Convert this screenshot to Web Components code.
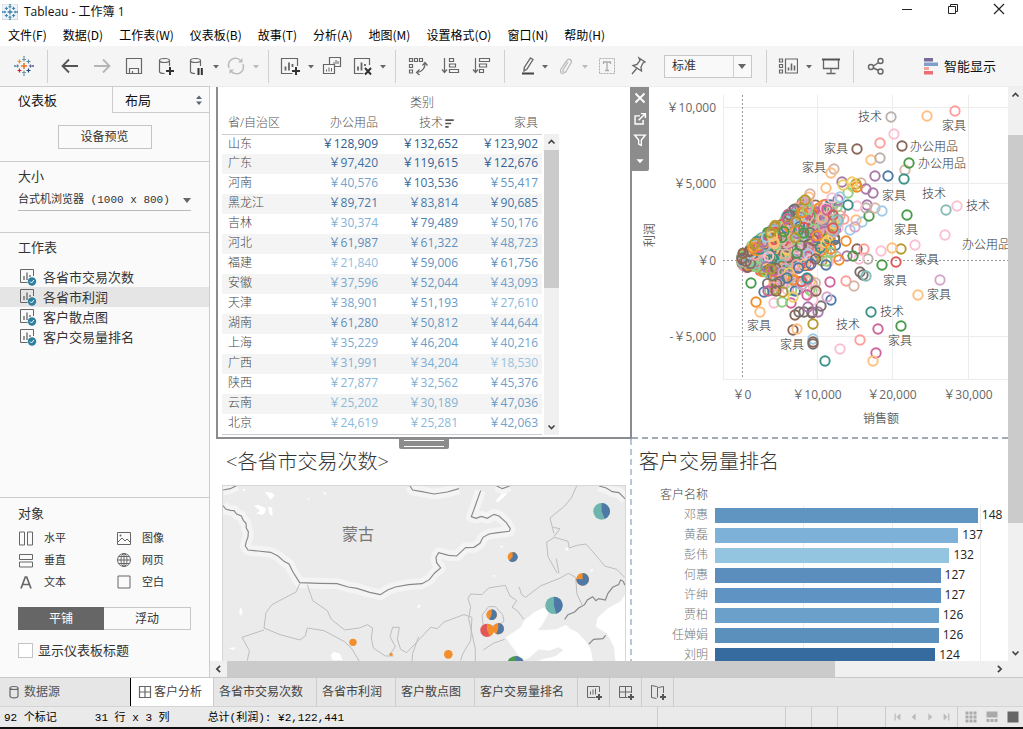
<!DOCTYPE html>
<html lang="zh-CN">
<head>
<meta charset="utf-8">
<title>Tableau - 工作簿 1</title>
<style>
html,body{margin:0;height:100%}
body{font-family:"Open Sans","Noto Sans CJK SC",sans-serif;font-size:12px;line-height:20px;color:#222;background:#fff}
</style>
</head>
<body>
<workbook-app></workbook-app>
<script>
const RESET = `*{box-sizing:border-box}button,select,input{font:inherit;color:inherit;margin:0;border-radius:0}
button{background:none;border:0;padding:0;cursor:pointer}ul{list-style:none;margin:0;padding:0}h2,h3{font:inherit;margin:0}a{color:inherit;text-decoration:none}`;
function define(name, css, html, init) {
  const tpl = document.createElement('template');
  customElements.define(name, class extends HTMLElement {
    connectedCallback() {
      if (this.shadowRoot) return;
      tpl.innerHTML = `<style>${RESET}${css}</style>${typeof html === 'function' ? html(this) : html}`;
      this.attachShadow({mode: 'open'}).append(tpl.content.cloneNode(true));
      if (init) init(this.shadowRoot, this);
    }
  });
}

/* ---------- icons, all on a 20 x 20 grid ---------- */
const plus = (x, y) => `<path d="M${x-4} ${y}h8M${x} ${y-4}v8" stroke="#333" stroke-width="2"/>`;
const S = 'fill="none" stroke="#666"';
const cross = (x, y, r, c, w = 1.2) => `<path d="M${x-r} ${y}h${2*r}M${x} ${y-r}v${2*r}" stroke="${c}" stroke-width="${w}"/>`;
const logo = cols => cross(10,10,3,cols[0],1.6)+cross(10,3.5,2,cols[1])+cross(10,16.5,2,cols[2])+cross(3.5,10,1.6,cols[3])+cross(16.5,10,1.6,cols[4])+cross(5.5,5.5,2,cols[5])+cross(14.5,5.5,2,cols[6])+cross(5.5,14.5,2,cols[7])+cross(14.5,14.5,2,cols[8])+cross(1,10,1,cols[3])+cross(19,10,1,cols[4])+cross(10,.8,.8,cols[1])+cross(10,19.2,.8,cols[2]);
const ICONS = {
  logo: logo(['#e8762c','#7099a6','#7099a6','#5b879b','#5b6591','#eb912c','#59879b','#c72035','#1f447e']),
  app: '<rect x="0" y="0" width="19.500" height="19.500" fill="#eef4f8" stroke="#c9d3da"/>' + logo(Array(9).fill('#3b7ea6')),
  back: '<path d="M18 10H2.500M9 3.500 2.500 10l6.500 6.500" fill="none" stroke="#555" stroke-width="1.800"/>',
  fwd: '<path d="M2 10h15.500M11 3.500l6.500 6.500-6.500 6.500" fill="none" stroke="#b5b5b5" stroke-width="1.800"/>',
  save: `<path d="M2.500 2.500h15v15h-15zM5.500 17.500v-5h9v5M8.500 17.500v-2.500" ${S} stroke-width="1.200"/>`,
  dbadd: `<path d="M13.500 10V4.500M3.500 4.500v11c0 1 2 2 5 2M8.500 2.500c3 0 5 .8 5 2s-2 2-5 2-5-.8-5-2 2-2 5-2z" ${S} stroke-width="1.200"/>` + plus(14,15),
  dbpause: `<path d="M14.500 10V4.500M4.500 4.500v11c0 1 2 2 4.500 2M9.500 2.500c3 0 5 .8 5 2s-2 2-5 2-5-.8-5-2 2-2 5-2z" ${S} stroke-width="1.200"/><path d="M12.500 12v7M15.800 12v7" stroke="#333" stroke-width="2"/>`,
  refresh: '<path d="M3 12a7 7 0 0 1 12-7M17 8a7 7 0 0 1-12 7" fill="none" stroke="#bbb" stroke-width="1.500"/><path d="M16.500 2v4.500H12zM3.500 18v-4.500H8z" fill="#bbb"/>',
  sheetadd: `<path d="M17.500 10V2.500h-16v15h11" ${S} stroke-width="1.200"/><path d="M5.500 14.500v-4M9 14.500v-8M12.500 11V8" stroke="#666" stroke-width="1.800"/>` + plus(16,15),
  dup: `<path d="M7.500 8V1.500h11v9h-6M1.500 8.500h11v9h-11z" ${S} stroke-width="1.200"/><path d="M4.500 15.500v-2M7 15.500v-4M9.500 15.500V12M12 8V6M14 8V4M16 8V5" stroke="#666"/>`,
  sheetdel: `<path d="M17.500 9V2.500h-15v15h9" ${S} stroke-width="1.200"/><path d="M6 14.500v-4M9.500 14.500v-8M13 10V8" stroke="#666" stroke-width="1.800"/><path d="M13 12l6 6.500M19 12l-6 6.500" stroke="#333" stroke-width="2"/>`,
  swap: `<path d="M1.500 2.500h3v3h-3zM6.500 2.500h3v3h-3zM11.500 2.500h3v3h-3zM1.500 8.500h3v3h-3zM1.500 14h3v3h-3zM17 7c.5 5-3 9-8 9.500M14.500 9.500 17 6.500l2.500 3M11.500 13.500l-3 3 3 2.500" ${S} stroke-width="1.200"/>`,
  asc: `<path d="M4.500 2v14M2 13.500l2.500 3 2.500-3M9.500 2.500h4v3h-4zM9.500 8h6v3h-6zM9.500 13.500h9v3h-9z" ${S} stroke-width="1.200"/>`,
  desc: `<path d="M3.500 2v14M1 13.500l2.500 3 2.500-3M7.500 2.500h10v3h-10zM7.500 8h7v3h-7zM7.500 13.500h4v3h-4z" ${S} stroke-width="1.200"/>`,
  pen: `<path d="M15.500 2l2.500 1.500-6 9.500-3 2 .3-3.500z" ${S} stroke-width="1.300"/><path d="M7 17.500h12" stroke="#444" stroke-width="2"/>`,
  clip: '<path d="M13 6l-5 8c-1 2 1.500 3.500 3 1.500l5-8.500c1.500-3-2-5.500-4.500-2L6 13c-1.500 3 .5 5 2.500 4.500" fill="none" stroke="#bbb" stroke-width="1.300"/>',
  text: '<rect x="2.500" y="2.500" width="15" height="15" fill="none" stroke="#aaa" stroke-dasharray="2 1"/><path d="M6.500 8V6h7v2M10 6v8.500M8 14.500h4" fill="none" stroke="#aaa" stroke-width="1.300"/>',
  pin: `<path d="M11 2l6 4-2 1-2 4 .5 4L5 9.500l4-1 3-4zM9 12l-5 6" ${S} stroke-width="1.300"/>`,
  cards: `<path d="M1.500 3h3v3h-3zM1.500 8.500h3v3h-3zM1.500 14h3v3h-3zM7.500 3h12v14h-12z" ${S} stroke-width="1.200"/><path d="M10.500 14.500v-3M13.500 14.500v-7M16.500 14.500v-5" stroke="#666" stroke-width="1.600"/>`,
  present: `<path d="M1 3.500h18" stroke="#555" stroke-width="2"/><path d="M2.500 4v8.500h15V4M10 12.500v5M5.500 17.500h9" ${S} stroke-width="1.300"/>`,
  share: `<circle cx="5" cy="11" r="2.500" ${S} stroke-width="1.400"/><circle cx="14.500" cy="5" r="2.500" ${S} stroke-width="1.400"/><circle cx="14.500" cy="15.500" r="2.500" ${S} stroke-width="1.400"/><path d="M7.500 10l5-3.500M7.500 12l5 2.500" ${S} stroke-width="1.400"/>`,
  showme: '<path d="M3 2h9v3.500H3z" fill="#7a6a99"/><path d="M3 6.500h14V10H3z" fill="#7f9fc8"/><path d="M3 11h5v3H3z" fill="#f3a59a"/><path d="M3 15h9v3.500H3z" fill="#ea6e74"/>',
  caret: '<path d="M7 9h6l-3 3.500z" fill="#666"/>',
  caretbig: '<path d="M6 8h8l-4 5z" fill="#666"/>',
  caretlt: '<path d="M7 9h6l-3 3.500z" fill="#bbb"/>',
  sheet: `<path d="M16.500 9V2.500h-13v13h7" ${S}/><path d="M7 13V9M10 13V5.500M13 10V8" stroke="#666" stroke-width="1.300"/><circle cx="15" cy="14.500" r="4.200" fill="#2d7fa0"/><path d="M13 14.500l1.500 1.500 2.500-3" fill="none" stroke="#fff"/>`,
  horiz: `<path d="M3.500 4h5v13h-5zM11.500 4h5v13h-5z" ${S}/>`,
  vert: `<path d="M3.500 4.500h13v5h-13zM3.500 12h13v5h-13z" ${S}/>`,
  letter: `<path d="M5 16.500 9.300 5h1.400L15 16.500M6.500 12.500h7" ${S} stroke-width="1.700"/>`,
  image: `<path d="M3.500 4.500h13v12h-13z M4 14l4-4 3 3 2-2 3.500 3.500" ${S}/><circle cx="6.500" cy="7.500" r="1" fill="#666"/>`,
  globe: `<circle cx="10" cy="10" r="6.500" ${S}/><ellipse cx="10" cy="10" rx="3" ry="6.500" ${S}/><path d="M10 3.500v13M3.500 10h13M4.500 6.500h11M4.500 13.500h11" ${S}/>`,
  blank: `<path d="M4 4h12v12H4z" ${S}/>`,
  updown: '<path d="M7 9h6l-3-3.500zM7 11.500h6L10 15z" fill="#5a6677"/>',
  cyl: `<path d="M6 6v8c0 2.500 8 2.500 8 0V6M6 6c0-2 8-2 8 0s-8 2-8 0z" ${S} stroke-width="1.200"/>`,
  grid: `<path d="M4.500 4.500h11v11h-11zM10 4.500v11M4.500 10h11" ${S} stroke-width="1.200"/>`,
  nsheet: `<path d="M15.500 10V4.500h-12v11h8M6.500 12.500v-3M9 12.500v-5M11.500 12.500v-6" ${S}/><path d="M12 15h6M15 12v6" stroke="#555" stroke-width="2"/>`,
  ndash: `<path d="M15.500 11V4.500h-12v11h8M9.500 4.500v11M3.500 10h12" ${S}/><path d="M12 15h6M15 12v6" stroke="#555" stroke-width="2"/>`,
  nstory: `<path d="M15.500 11V4.500l-5 1-2-1-5-1v12l5 1M9.500 5.500v10" ${S}/><path d="M12 15h6M15 12v6" stroke="#555" stroke-width="2"/>`,
  min: '<path d="M5 10.500h10" stroke="#222"/>',
  restore: '<path d="M5.500 7.500h7v7h-7zM7.500 7V5.500h7v7H13" fill="none" stroke="#222"/>',
  close: '<path d="M5 5l10 10M15 5 5 15" stroke="#222" stroke-width="1.200"/>',
  wclose: '<path d="M5 5l10 10M15 5 5 15" stroke="#fff" stroke-width="2"/>',
  wgoto: '<path d="M10 6.500H4.500v9h9V11M8.500 11.500l7-7M11 4h5v5" fill="none" stroke="#fff" stroke-width="1.600"/>',
  wfilter: '<path d="M4 4.500h12L11.500 10v6l-3-1.500V10z" fill="none" stroke="#fff" stroke-width="1.500"/>',
  wcaret: '<path d="M6 8h8l-4 4.500z" fill="#fff"/>',
  sort: '<path d="M5 6h10M5 10h7M5 14h4" stroke="#555" stroke-width="2"/>',
  up: '<path d="M6 12l4-4 4 4" fill="none" stroke="#444" stroke-width="2.200"/>',
  down: '<path d="M6 8l4 4 4-4" fill="none" stroke="#444" stroke-width="2.200"/>',
  left: '<path d="M12 6l-4 4 4 4" fill="none" stroke="#444" stroke-width="2.200"/>',
  right: '<path d="M8 6l4 4-4 4" fill="none" stroke="#444" stroke-width="2.200"/>',
  first: '<path d="M6.500 5.500v9" stroke="#bbb" stroke-width="1.500"/><path d="M8 10l5-4.500v9z" fill="#bbb"/>',
  prev: '<path d="M7 10l5-4.500v9z" fill="#bbb"/>',
  next: '<path d="M13 10 8 5.500v9z" fill="#bbb"/>',
  last: '<path d="M13.500 5.500v9" stroke="#bbb" stroke-width="1.500"/><path d="M12 10 7 5.500v9z" fill="#bbb"/>',
  tiles: '<path d="M4.500 6h11M4.500 10h11M4.500 14h11" stroke="#aaa" stroke-width="3" stroke-dasharray="3 1"/>',
  film: '<path d="M4.500 4.500h11v6h-11z" fill="#aaa"/><path d="M4.500 13.500h11" stroke="#aaa" stroke-width="3" stroke-dasharray="3 1"/>',
  full: '<path d="M4.500 4.500h11v11h-11z" fill="#666"/>'
};
define('ui-icon', ':host{display:inline-flex;flex:none;width:20px;height:20px}svg{display:block;width:100%;height:100%}',
  el => `<svg viewBox="0 0 20 20" aria-hidden="true">${ICONS[el.getAttribute('name')]}</svg>`);
const ic = n => `<ui-icon name="${n}"></ui-icon>`;

/* ---------- title and menu ---------- */
define('title-bar', `:host{display:flex;align-items:center;height:23px;padding:0 14px 0 2px;color:#111}
 .app{width:16px;height:16px;margin-right:6px}h1{font:inherit;margin:0;flex:1}.win{display:flex;gap:26px}`,
  `<ui-icon class="app" name="app"></ui-icon><h1><slot></slot></h1><div class="win">${[['min','最小化'],['restore','还原'],['close','关闭']].map(b=>`<button aria-label="${b[1]}">${ic(b[0])}</button>`).join('')}</div>`);

define('menu-bar', `:host{display:block}ul{display:flex;gap:16px;height:23px;align-items:center;padding:0 8px;font-family:"Noto Sans CJK SC",sans-serif;color:#000}button{white-space:nowrap;display:block}`,
  `<ul>${['文件(F)','数据(D)','工作表(W)','仪表板(B)','故事(T)','分析(A)','地图(M)','设置格式(O)','窗口(N)','帮助(H)'].map(t=>`<li><button>${t}</button></li>`).join('')}</ul>`);

/* ---------- toolbar ---------- */
const b = (n, l, w = '') => `<button class="${w}" aria-label="${l}">${ic(n)}</button>`;
const caret = (n = 'caret') => `<button class="c" aria-label="更多">${ic(n)}</button>`;
define('tool-bar', `:host{display:flex;align-items:center;height:40px;background:#f5f5f5;flex:none}
 .g{display:flex;align-items:center;height:33px;padding:0 6px;border-right:1px solid #d0d0d0}
 .g.end{border:0}.g button{width:32px;height:28px;display:flex;justify-content:center;align-items:center}
 .g button.m{width:30px}.g button.s{width:28px}.g button.c{width:12px}.g button.c ui-icon{margin:0 -4px}
 .g button.l{width:35px}
 label{display:flex;align-items:center;position:relative;margin:0 8px 0 11px}
 select{appearance:none;width:88px;height:23px;border:1px solid #c8c8c8;background:#f9f9f9;padding:0 24px 0 7px;color:#333}
 label::after{content:"";position:absolute;right:18px;top:1px;bottom:1px;border-left:1px solid #d0d0d0}
 label ui-icon{position:absolute;right:0;pointer-events:none}
 .show{margin-left:auto;margin-right:27px;display:flex;align-items:center;gap:3px;font-size:13px;color:#111;white-space:nowrap}`,
 `<div class="g">${b('logo','开始页','l')}</div>
  <div class="g">${b('back','撤消')}${b('fwd','重做')}${b('save','保存')}${b('dbadd','新建数据源')}${b('dbpause','暂停自动更新','s')}${caret()}${b('refresh','运行更新','s')}${caret('caretlt')}</div>
  <div class="g">${b('sheetadd','新建工作表','m')}${caret()}${b('dup','复制','m')}${b('sheetdel','清除','m')}${caret()}</div>
  <div class="g">${b('swap','交换行和列')}${b('asc','升序')}${b('desc','降序')}</div>
  <div class="g">${b('pen','突出显示','s')}${caret()}${b('clip','组成员','s')}${caret('caretlt')}${b('text','显示标签')}${b('pin','固定轴','m')}<label><select aria-label="适合"><option>标准</option><option>整个视图</option></select>${ic('caretbig')}</label></div>
  <div class="g">${b('cards','显示卡','m')}${caret()}${b('present','演示模式')}</div>
  <div class="g end">${b('share','共享')}</div>
  <button class="show">${ic('showme')}<span>智能显示</span></button>`);

/* ---------- side panel ---------- */
define('side-panel', `:host{display:flex;flex-direction:column;width:210px;flex:none;background:#fafafa;border-right:1px solid #ccc;border-top:1px solid #ccc;color:#333}
 .tabs{display:flex;height:26px;font-size:13px;color:#111}.tabs button{text-align:left;display:flex;align-items:center}
 .tabs button:first-child{width:112px;padding-left:18px}.tabs button:last-child{flex:1;justify-content:space-between;padding-left:12px;border-left:1px solid #ccc;border-bottom:1px solid #ccc}
 section{border-bottom:1px solid #ccc;padding:0 18px}
 h2{font-size:13px}
 .preview{height:49px;display:flex;justify-content:center;align-items:center}.preview button{width:94px;height:24px;border:1px solid #c4c4c4}
 .size{height:71px;padding-top:4px}.size label{display:flex;position:relative;margin-top:4px}
 .size select{appearance:none;border:0;border-bottom:1px solid #bbb;background:none;width:100%;height:21px;padding:0;font:11px/20px "Liberation Mono","Noto Sans CJK SC",monospace;white-space:pre}
 .size ui-icon{position:absolute;right:-6px;top:0;pointer-events:none}
 .sheets{flex:1;padding:4px 0 0}.sheets h2{padding:0 18px;margin-bottom:10px}
 .sheets a{display:flex;align-items:center;height:20px;padding-left:17px;gap:6px;font-size:13px}.sheets .on{background:#e5e5e5}
 .obj{height:179px;border:0;padding-top:5px}
 .objs{display:grid;grid-template-columns:98px 1fr;grid-auto-rows:22px;margin-top:4px;font-size:11px}.objs li{display:flex;align-items:center;gap:8px;margin-left:-2px}
 .seg{display:flex;height:23px;border:1px solid #c8c8c8;margin-top:14px}.seg button{flex:1}.seg .on{background:#666;color:#fff;margin:-1px 0 -1px -1px}
 .chk{display:flex;align-items:center;gap:5px;margin-top:10px;font-size:13px}input{appearance:none;width:15px;height:15px;border:1px solid #c4c4c4;background:#fff}`,
 `<div class="tabs" role="tablist"><button role="tab" aria-selected="true">仪表板</button><button role="tab">布局${ic('updown')}</button></div>
  <section class="preview"><button>设备预览</button></section>
  <section class="size"><h2>大小</h2><label><select aria-label="大小"><option>台式机浏览器 (1000 x 800)</option></select>${ic('caretbig')}</label></section>
  <section class="sheets"><h2>工作表</h2><ul>${['各省市交易次数','各省市利润','客户散点图','客户交易量排名'].map((t,i)=>`<li><a href="#sheet-${i}" class="${i===1?'on':''}">${ic('sheet')}${t}</a></li>`).join('')}</ul></section>
  <section class="obj"><h2>对象</h2><ul class="objs">${[['horiz','水平'],['image','图像'],['vert','垂直'],['globe','网页'],['letter','文本'],['blank','空白']].map(o=>`<li>${ic(o[0])}${o[1]}</li>`).join('')}</ul>
  <div class="seg"><button class="on">平铺</button><button>浮动</button></div>
  <label class="chk"><input type="checkbox">显示仪表板标题</label></section>`);

/* ---------- scroll bar: start/size are shares of the track ---------- */
define('scroll-bar', `:host{display:flex;background:#f0f0f0;flex:none;height:16px}:host([vertical]){flex-direction:column;height:auto;width:15px}
 .t{flex:1;display:flex;flex-direction:inherit;min-height:0}.p{flex:var(--start,0)}.h{flex:var(--size,1);background:#cbcbcb}.e{flex:var(--rest,0)}
 ui-icon{width:17px;height:16px}:host([vertical]) ui-icon{width:15px}`,
 el => { const v = el.hasAttribute('vertical'); return `${ic(v?'up':'left')}<div class="t"><div class="p"></div><div class="h"></div><div class="e"></div></div>${ic(v?'down':'right')}`; });

/* ---------- crosstab ---------- */
const ROWS = [['山东',128909,132652,123902],['广东',97420,119615,122676],['河南',40576,103536,55417],['黑龙江',89721,83814,90685],['吉林',30374,79489,50176],['河北',61987,61322,48723],['福建',21840,59006,61756],['安徽',37596,52044,43093],['天津',38901,51193,27610],['湖南',61280,50812,44644],['上海',35229,46204,40216],['广西',31991,34204,18530],['陕西',27877,32562,45376],['云南',25202,30189,47036],['北京',24619,25281,42063]];
const STOPS = [[18000,[150,196,224]],[45000,[107,157,200]],[85000,[72,122,172]],[132652,[42,87,141]]];
function shade(v) {
  let i = 0; while (i < 2 && v > STOPS[i+1][0]) i++;
  const [a, ca] = STOPS[i], [z, cz] = STOPS[i+1], t = (v-a)/(z-a);
  return `rgb(${ca.map((c,k)=>Math.round(c+(cz[k]-c)*t))})`;
}
const YEN = '\uFFE5';
const yen = v => YEN + v.toLocaleString('en-US');
define('crosstab-view', `:host{display:flex;padding:7px 0 0 4px}
 table{border-collapse:collapse;width:320px;table-layout:fixed;color:#666;border-bottom:1px solid #ccc}
 th,td{height:20px;padding:0 4px 0 0;text-align:right;font-weight:300;line-height:18px;vertical-align:top;white-space:nowrap}
 th:first-child{text-align:left;padding-left:6px}
 tbody th{color:#444}thead th{color:#555}thead .top th{text-align:center;padding:0}
 thead .cols{border-bottom:1px solid #ccc}tbody tr:nth-child(even){background:#f4f4f4}
 .s{display:inline-flex;align-items:center;height:18px}.s ui-icon{width:17px;height:17px;margin:0 0 0 -2px}td{font-weight:400}
 scroll-bar{margin:40px 0 0 2px;--start:0;--size:138;--rest:130}`,
 `<table><thead><tr class="top"><td></td><th colspan="3" scope="colgroup">类别</th></tr><tr class="cols"><th scope="col">省/自治区</th><th scope="col">办公用品</th><th scope="col"><span class="s">技术${ic('sort')}</span></th><th scope="col">家具</th></tr></thead>
 <tbody>${ROWS.map(r=>`<tr><th scope="row">${r[0]}</th>${r.slice(1).map(v=>`<td style="color:${shade(v)}">${yen(v)}</td>`).join('')}</tr>`).join('')}</tbody></table><scroll-bar vertical></scroll-bar>`);

/* ---------- scatter plot ---------- */
const P = {n:'#4e79a7',b:'#a0cbe8',o:'#f28e2b',O:'#ffbe7d',g:'#4a9a4a',G:'#8cd17d',y:'#b6992d',Y:'#f1ce63',t:'#3a9188',T:'#86bcb6',r:'#e15759',R:'#ff9d9a',k:'#79706e',K:'#bab0ac',m:'#d0629a',M:'#fabfd2',p:'#a878a8',L:'#d4a6c8',w:'#8a6558',W:'#d7b5a6'};
const DOTS = '891,117,K 927,116,O 955,111,R 894,134,M 880,143,R 902,146,w 857,149,w 871,160,O 880,158,K 905,170,W 909,163,g 904,179,t 875,176,p 888,176,n 834,169,W 831,173,O 826,188,O 842,182,p 810,194,W 805,200,y 861,183,W 866,189,p 873,193,p 856,184,y 853,187,Y 857,187,o 852,182,Y 848,193,G 843,185,Y 907,215,g 957,206,M 946,210,T 945,235,M 915,245,M 901,249,y 892,248,O 881,251,M 868,259,K 859,259,M 857,249,w 846,241,o 856,220,O 862,222,b 869,216,g 867,205,p 866,208,K 875,208,W 882,211,b 857,206,M 848,205,t 838,200,p 832,198,M 840,197,b 833,215,r 838,220,T 833,228,r 850,230,b 855,227,L 827,210,m 847,256,p 839,260,o 864,249,R 853,256,g 882,265,g 896,262,r 940,280,L 918,295,O 860,272,k 863,275,k 866,276,T 846,281,R 854,286,W 830,282,m 871,312,t 878,329,m 901,326,g 860,340,R 840,349,M 825,361,t 876,353,m 873,361,O 813,324,y 813,339,b 813,342,w 813,344,k 793,330,w 797,329,O 756,302,o 760,312,O 751,283,g 795,315,w 799,312,k 804,312,k 812,313,w 812,312,k 818,312,p 821,306,k 831,300,n 827,297,L 813,300,M 816,291,w 808,307,p 807,295,m 791,303,m 774,303,M 782,302,G 764,292,n 768,291,m 783,292,y 776,291,w 793,297,Y 808,279,m 807,278,t 793,280,o 787,278,n 811,264,n 826,265,n'.split(' ').map(s=>s.split(','));
const NAMES = [['技术',858,117],['家具',942,126],['办公用品',910,147],['家具',824,149],['办公用品',918,164],['家具',802,168],['家具',882,196],['技术',922,194],['技术',966,206],['家具',894,230],['办公用品',962,245],['家具',915,260],['家具',883,281],['家具',927,295],['技术',880,312],['技术',836,325],['家具',888,341],['家具',747,326],['家具',780,345]];
function scatter() {
  let seed = 7; const rnd = () => (seed = (seed*16807) % 2147483647) / 2147483647;
  const pal = Object.values(P), ring = (x,y,c) => `<circle cx="${x}" cy="${y}" r="4.700" stroke="${c}"/>`;
  let out = '';
  const put = (x, y) => { out += ring(x.toFixed(1), y.toFixed(1), pal[Math.floor(rnd()*pal.length)]); };
  /* the mass of small orders fans out from the origin and thins to the right */
  for (let i = 0; i < 1500; i++) {
    const d = (1-Math.sqrt(1-rnd()))*102, s = (rnd()+rnd())/2;
    const top = 254 - Math.min(d,66)*.84 - Math.max(0,d-66)*.15, bottom = 266 + (d < 35 ? d*.5 : 17 - (d-35)*.45);
    put(742+d, bottom+(top-bottom)*(.2*rnd()+.8*s));
  }
  for (let i = 0; i < 330; i++) {
    const d = Math.sqrt(rnd())*68;
    put(742+d, 254-d*(.25+rnd()*.61));
  }
  for (let i = 0; i < 50; i++) put(795+rnd()*42, 208+rnd()*62);
  for (let i = 0; i < 40; i++) put(762+rnd()*54, 268+rnd()*24);
  return out + DOTS.map(d=>ring(d[0],d[1],P[d[2]])).join('');
}
define('scatter-view', `:host{display:block}svg{display:block;width:100%;height:353px}text{font-size:12px;fill:#666}.n text{fill:#333;font-weight:300}`,
 () => `<svg role="img" aria-label="客户散点图"><g transform="translate(-632 -86)">
 <path d="M723.500 95v284M817.500 95v284M892.500 95v284M968.500 95v284M723 107.500h300M723 183.500h300M723 336.500h300M723 379.500h300" stroke="#ececec"/>
 <path d="M742.500 95v284M723 260.500h300" stroke="#999" stroke-dasharray="2 2"/>
 <g fill="none" stroke-width="1.900">${scatter()}</g>
 <g text-anchor="end"><text x="716" y="112">${YEN}10,000</text><text x="716" y="188">${YEN}5,000</text><text x="716" y="265">${YEN}0</text><text x="716" y="341">-${YEN}5,000</text></g>
 <g text-anchor="middle"><text x="742" y="399">${YEN}0</text><text x="817" y="399">${YEN}10,000</text><text x="892" y="399">${YEN}20,000</text><text x="968" y="399">${YEN}30,000</text><text x="881" y="423">销售额</text><text transform="translate(654 235) rotate(-90)">利润</text></g>
 <g class="n">${NAMES.map(n=>`<text x="${n[1]}" y="${n[2]+4}">${n[0]}</text>`).join('')}</g></g></svg>`);

/* ---------- map ---------- */
function pie(x, y, r, share, c1, c2) {
  const a = share*2*Math.PI, ex = x+r*Math.sin(a), ey = y-r*Math.cos(a);
  return `<circle cx="${x}" cy="${y}" r="${r}" fill="${c2}"/>` + (share ? `<path d="M${x} ${y}V${y-r}A${r} ${r} 0 ${share>.5?1:0} 1 ${ex.toFixed(1)} ${ey.toFixed(1)}z" fill="${c1}"/>` : '');
}
const BORDER = 'M37 197l8 10 14 4 11 1 8 10 14 6 6 13 8 9 1 15 6 10-1 16-5 13-3 14 8 12 30 3 38 4 22 11 18 16 15 8 12 24 20 32 60 2 52 1 34 10 26 4 38 12 32 7 22-14 23-9 40-7 40-3 22-12 16-20 18-15-12-16-2-16 8-14 30 8 24 2 18-17 9-8 25-1 18-12 9-18 18-10 27-4 34-4 3-8-12-18-22-20-15-5-20 12-18-6-16 6-14-5 6-16 22-62M598 138l8 12 28 5 36 7 40-6 35-10M37 150l22-4 18-9M858 138l17 8 22-8M1165 138l22 6 18 11 20 3 20 20';
define('map-view', `:host{display:flex;flex-direction:column;min-width:0}svg{display:block;width:100%;height:190px;border:solid #d6d6d6;border-width:1px 1px 0;background:#ebebeb}text{font:16px "Noto Sans CJK SC",sans-serif;fill:#777}`,
 `<svg role="img" aria-label="各省市交易次数"><g transform="scale(.3333) translate(-37 -138)">
 <path d="M885 592l30-20 15-10 10-20 30-25 28-14 18 10-10 22-12 20-12 16 22-1 34-2 28-14 14 14 20 8 24 26 16 26 10 52H936l60-22 40-10 22-18-14-8-30 10-30-4-26 24-24 12-14-22zM1262 436l-32 48-40 22-30 28-4 26 32 20 22 40 6 60h60z" fill="#fff"/>
 <path d="M130 198l12-4 14 6 10 6-4 14-8 6-18-6 12-8zM172 200l12 2 2 26-8-4zM162 155l22 3 8 8-12 14-8-12zM857 180l20-22 14 2-14 14-18 14zM88 500l8 14-4 14-6-8zM360 645l10-10 18 6 8 20h-30zM94 146l10 2-4 6zM288 176l10 0-2 5zM620 500l8-8 2 8-8 4zM842 408l12-4-2 6zM866 318l12 0-4 6zM1062 322l12 4-6 8zM1136 392l10-6 0 10zM53 624l22-2-6 8zM336 156l12 2-4 8z" fill="#fff"/>
 <path d="${BORDER}" fill="none" stroke="#f4f4f4" stroke-width="32" stroke-linejoin="round"/>
 <path d="${BORDER}M1250 436l-8-2-4-10-8-4-6 14-18 8-14 18-8 20-20-4-8 6-10-12-16 10-8 14-18 10-12 12-20 8-10 14M1135 612l14-14 28-2 8-10" fill="none" stroke="#888" stroke-width="3.500"/>
 <path d="M268 430l-12 26-38 20-34 18-18 24-6 46 48 20 60 16 16-12 6-24 50 8 30 16 30 16 22 20 24 40M160 570l-66 22 22 40-6 30M290 434l16 48 44 30 12 26 40 32 44-6 24-10 16 10-4 30 6 30 36 24 24 0M540 640l14-20-16-30 8-28 20 0-6 36 10 30 18 10 42-44 30-32 20 4 20-20 60-22 24 8-4 70-24 40-6 20M624 590l-18 50-2 24M780 500l-8-24 8-14 34 2 20-20 50-8 14 32 20 14-14 20 14 8 22 28M780 500l-6 36 20 90 0 40M818 630l30-20 34-12M834 500l20 0 22 24 4 20-20 14-42-2-4-30zM925 440l8 24 12 8 44-34 60-24 24-14 22 12 4 50 16 34M1040 400l-28-50-4-44 24-14 40 12 4 20 24-8 26-4 40 46 16 20 36 10 24 24M1045 400l-8-44M1030 280l-12-46 44-36 20-24 16-36M1030 290l18-24-20-4" fill="none" stroke="#bdbdbd" stroke-width="3"/>
 ${pie(1173,214,25,.44,'#4e79a7','#6db5ad')}${pie(906,351,15,.62,'#4e79a7','#f28e2b')}${pie(1116,418,19,.76,'#4e79a7','#f28e2b')}${pie(1030,496,26,.46,'#4e79a7','#6db5ad')}${pie(843,524,16,.57,'#4e79a7','#f28e2b')}${pie(829,571,20,.43,'#f28e2b','#e15759')}${pie(863,566,17,.56,'#4e79a7','#f28e2b')}${pie(427,607,11,0,'','#f28e2b')}${pie(541,643,5,0,'','#f28e2b')}${pie(713,643,13,0,'','#f28e2b')}${pie(915,674,26,.5,'#4e79a7','#4a9a4a')}
 </g><text x="119" y="54">蒙古</text></svg>`);

/* ---------- bar chart ---------- */
define('bar-view', `:host{display:block;--label:77px}
 .h,.n{width:var(--label);text-align:right;padding-right:1px;color:#777;font-weight:300;white-space:nowrap}.h{color:#444;height:20px}
 .rows{background:repeating-linear-gradient(90deg,transparent 0 calc(100%*50/165 - 1px),#eee 0 calc(100%*50/165)) right/calc(100% - 83px) 100% no-repeat}
 li{display:flex;height:20px;align-items:center}.n{flex:none;margin-right:6px}.tr{flex:1;display:flex;align-items:center;min-width:0}
 .b{flex:none;height:15px;width:calc(100%*var(--v)/165)}.v{margin-left:4px;color:#222;font-size:12px}`,
 `<div class="h">客户名称</div><ul class="rows">${[['邓惠',148,'#6095c2'],['黄磊',137,'#7eb1d8'],['彭伟',132,'#93c4e0'],['何惠',127,'#5b8ebd'],['许绅',127,'#5e93c3'],['贾柏',126,'#6ba0cb'],['任婵娟',126,'#5b8fbc'],['刘明',124,'#366b9f']].map(r=>`<li><span class="n">${r[0]}</span><div class="tr"><div class="b" style="--v:${r[1]};background:${r[2]}"></div><span class="v">${r[1]}</span></div></li>`).join('')}</ul>`);

/* ---------- dashboard ---------- */
define('dashboard-canvas', `:host{flex:1;min-width:0;display:grid;grid-template:minmax(0,1fr) 16px/minmax(0,1fr) 15px;border-top:1px solid #eee}
 .view{overflow:hidden;display:grid;grid-template:352px 1fr/416fr 376fr;padding-left:6px}
 .zone{position:relative;min-width:0}
 .sel{border:solid #8a8c90;border-width:0 2px 2px}.sc{border-bottom:2px dashed #a4a9b8;overflow:hidden}
 .mp{border-right:2px dashed #b9c5da}.mp{padding:0 4px 0 6px}.title{font-size:20px;line-height:30px;font-weight:300;color:#333;white-space:nowrap}
 .mp .title{padding:8px 0 8px 4px}.br .title{padding:8px 0 8px 7px}
 .handle{position:absolute;z-index:2;left:50%;transform:translateX(-50%);top:100%;width:50px;height:12px;background:#8c8c8c;padding:3px 5px;border-radius:0 0 2px 2px}
 .handle::before{content:"";display:block;height:5px;border:solid #fff;border-width:1px 0}
 .tools{position:absolute;z-index:2;left:100%;top:0;width:19px;height:84px;background:#8c8c8c;display:flex;flex-direction:column;align-items:center;border-radius:0 0 2px 0}
 .tools button{height:21px;width:18px;display:flex;align-items:center}.tools ui-icon{width:18px;height:18px}
 scatter-view{margin-top:-1px}.v{--start:32;--size:387;--rest:122}.hz{--start:0;--size:607;--rest:156}.corner{background:#f0f0f0}`,
 `<div class="view"><div class="zone sel"><crosstab-view></crosstab-view><div class="tools">${[['wclose','移除'],['wgoto','转到工作表'],['wfilter','用作筛选器'],['wcaret','更多选项']].map(t=>`<button aria-label="${t[1]}">${ic(t[0])}</button>`).join('')}</div><div class="handle"></div></div>
 <div class="zone sc"><scatter-view></scatter-view></div>
 <div class="zone mp"><h2 class="title">&lt;各省市交易次数&gt;</h2><map-view></map-view></div>
 <div class="zone br"><h2 class="title">客户交易量排名</h2><bar-view></bar-view></div></div>
 <scroll-bar class="v" vertical></scroll-bar><scroll-bar class="hz"></scroll-bar><div class="corner"></div>`);

/* ---------- sheet tabs and status ---------- */
define('sheet-tabs', `:host{display:flex;height:30px;flex:none;background:#e6e6e6;border-top:1px solid #c8c8c8;border-bottom:1px solid #d4d4d4;color:#444}
 button{border-right:1px solid #ccc;padding:0 13px 0 5px;display:flex;align-items:center;white-space:nowrap}
 .src{width:130px;padding:0 4px;border:0;color:#555}.on ui-icon{margin-right:-1px}
 .on{background:#fff;border-left:1px solid #000;padding:0 11px 0 4px}.new{padding:0;width:32px;justify-content:center}`,
 `<button class="src">${ic('cyl')}数据源</button><button class="on">${ic('grid')}客户分析</button>${['各省市交易次数','各省市利润','客户散点图','客户交易量排名'].map(t=>`<button>${t}</button>`).join('')}${[['nsheet','新建工作表'],['ndash','新建仪表板'],['nstory','新建故事']].map(n=>`<button class="new" aria-label="${n[1]}">${ic(n[0])}</button>`).join('')}`);

define('status-bar', `:host{display:flex;height:22px;flex:none;background:#eaeaea;border-bottom:2px solid #111;padding-left:4px;font:11px/22px "Liberation Mono","Noto Sans CJK SC",monospace;color:#000;white-space:nowrap}
 .t{display:flex;gap:38px;flex:1}.c{border-left:1px solid #ccc}.c1{width:128px}.c2{width:26px}.c3{width:48px}
 .nav,.vw{display:flex;align-items:center;border-left:1px solid #ccc}.nav{width:72px;padding:0 4px}.nav button{width:16px;display:flex}.nav ui-icon{width:16px;height:16px}.vw{gap:1px;padding:0 0 0 3px}.vw button{display:flex}`,
 `<div class="t"><span>92 个标记</span><span>31 行 x 3 列</span><span>总计(利润): ¥2,122,441</span></div><div class="c c1"></div><div class="c c2"></div><div class="c c2"></div><div class="c c3"></div>
 <div class="nav">${[['first','第一个'],['prev','上一个'],['next','下一个'],['last','最后一个']].map(n=>`<button aria-label="${n[1]}">${ic(n[0])}</button>`).join('')}</div>
 <div class="vw">${[['tiles','工作表排序程序'],['film','幻灯片'],['full','标签']].map(n=>`<button aria-label="${n[1]}">${ic(n[0])}</button>`).join('')}</div>`);

define('workbook-app', `:host{display:flex;flex-direction:column;height:100vh;overflow:hidden}main{flex:1;display:flex;min-height:0}`,
 `<title-bar>Tableau - 工作簿 1</title-bar><menu-bar></menu-bar><tool-bar></tool-bar><main><side-panel></side-panel><dashboard-canvas></dashboard-canvas></main><sheet-tabs></sheet-tabs><status-bar></status-bar>`);
</script>
</body>
</html>
